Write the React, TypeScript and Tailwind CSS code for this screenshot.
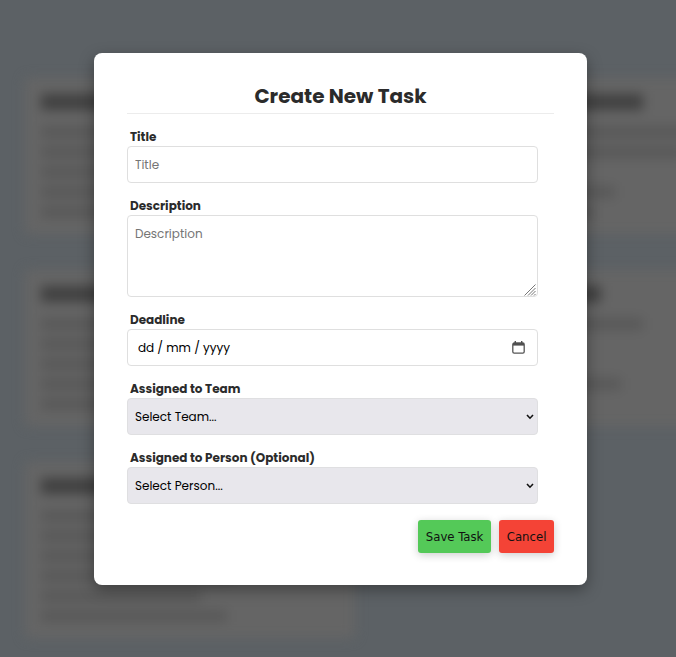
import React from "react";

type Card = { title: string; lines: string[] };

const cards: Card[] = [
  { title: "w-40", lines: ["w-72", "w-64", "w-48", "w-56", "w-52"] },
  { title: "w-[240px]", lines: ["w-[284px]", "w-[280px]", "w-0", "w-[212px]", "w-[190px]"] },
  { title: "w-44", lines: ["w-64", "w-72", "w-48", "w-56", "w-52"] },
  { title: "w-[198px]", lines: ["w-[240px]", "w-0", "w-0", "w-[218px]", "w-40"] },
  { title: "w-44", lines: ["w-72", "w-64", "w-60", "w-48", "w-[160px]", "w-[186px]"] },
];

function BackgroundCard({ title, lines }: Card) {
  return (
    <div className="rounded bg-[#656565] p-4 blur-[6px]">
      <div className={`mb-4 h-4 bg-[#404040] ${title}`} />
      <div className="flex flex-col gap-2">
        {lines.map((width, i) => (
          <div key={i} className={`h-3 bg-[#585858] ${width}`} />
        ))}
      </div>
    </div>
  );
}

function Field({ id, label, children }: { id: string; label: string; children: React.ReactNode }) {
  return (
    <div className="mb-[13px] flex flex-col">
      <label htmlFor={id} className="pl-[3px] text-[12px] leading-[19px] font-bold text-[#2b2b2b]">
        {label}
      </label>
      {children}
    </div>
  );
}

function SelectBox({ id, text }: { id: string; text: string }) {
  return (
    <div className="relative">
      <select
        id={id}
        className="block h-[37px] w-full appearance-none rounded border border-[#dfdfe1] bg-[#e8e7ec] px-[7px] text-[12px] text-black"
      >
        <option>{text}</option>
      </select>
      <svg
        className="pointer-events-none absolute top-[15px] right-1 h-2 w-2"
        viewBox="0 0 8 8"
        fill="none"
        stroke="#111"
        strokeWidth="1.6"
      >
        <path d="M1 2l3 3.2L7 2" />
      </svg>
    </div>
  );
}

export default function App() {
  return (
    <div className="relative h-screen overflow-hidden bg-[#5c6165] font-['Poppins','Inter',sans-serif]">
      <div aria-hidden="true" className="grid grid-cols-[330px_330px] gap-x-8 gap-y-9 pt-[78px] pl-[25px]">
        {cards.map((card, i) => (
          <BackgroundCard key={i} {...card} />
        ))}
      </div>

      <div className="absolute inset-0 flex items-start justify-center overflow-auto pt-[53px] pl-[5px]">
        <form
          role="dialog"
          aria-labelledby="dialog-title"
          onSubmit={(e) => e.preventDefault()}
          className="w-[73.5%] rounded-lg bg-white px-[33px] pt-7 pb-8 shadow-[0_5px_15px_rgba(0,0,0,0.35)]"
        >
          <h2
            id="dialog-title"
            className="mb-[13px] border-b border-[#ececec] pb-[2px] text-center text-[20px] leading-[30px] font-bold text-[#2b2b2b]"
          >
            Create New Task
          </h2>

          <div className="mr-4">
            <Field id="title" label="Title">
              <input
                id="title"
                type="text"
                placeholder="Title"
                className="h-[37px] rounded border border-[#dfdfdf] px-[7px] text-[12px] placeholder:text-[#757575]"
              />
            </Field>

            <Field id="description" label="Description">
              <div className="relative">
                <textarea
                  id="description"
                  placeholder="Description"
                  className="block h-[82px] w-full resize-none rounded border border-[#dfdfdf] px-[7px] py-2 text-[12px] leading-5 placeholder:text-[#757575]"
                />
                <svg
                  className="pointer-events-none absolute right-[2px] bottom-[1px] h-3 w-3"
                  viewBox="0 0 12 12"
                  stroke="#777"
                  strokeWidth="1"
                >
                  <path d="M0.5 11.5l11-11M4 11.5L11.5 4M7 11.5L11.5 7M10 11.5l1.5-1.5" />
                </svg>
              </div>
            </Field>

            <Field id="deadline" label="Deadline">
              <div className="flex h-[37px] items-center rounded border border-[#dfdfdf] pr-3 pl-[10px]">
                <input
                  id="deadline"
                  type="text"
                  placeholder="dd / mm / yyyy"
                  className="min-w-0 flex-1 text-[12px] outline-none placeholder:text-black"
                />
                <button type="button" aria-label="Open calendar">
                  <svg className="block h-[13px] w-[13px]" viewBox="0 0 13 13" fill="none">
                    <rect x="0.8" y="2" width="11.4" height="10.2" rx="1.4" stroke="#555" strokeWidth="1.3" />
                    <path d="M1 2h11v2.6H1z" fill="#505050" />
                    <path d="M3.3 0v2.5M9.7 0v2.5" stroke="#505050" strokeWidth="1.4" />
                  </svg>
                </button>
              </div>
            </Field>

            <Field id="team" label="Assigned to Team">
              <SelectBox id="team" text="Select Team..." />
            </Field>

            <Field id="person" label="Assigned to Person (Optional)">
              <SelectBox id="person" text="Select Person..." />
            </Field>
          </div>

          <div className="flex justify-end gap-2 pt-[3px] font-['DejaVu_Sans_Condensed','Noto_Sans',sans-serif] text-[13px] text-[#111]">
            <button
              type="submit"
              className="h-[33px] w-[73px] rounded-[3px] bg-[#54c958] whitespace-nowrap shadow-[0_2px_8px_rgba(0,0,0,0.2)]"
            >
              Save Task
            </button>
            <button
              type="button"
              className="h-[33px] w-[55px] rounded-[3px] bg-[#f44336] whitespace-nowrap shadow-[0_2px_8px_rgba(0,0,0,0.2)]"
            >
              Cancel
            </button>
          </div>
        </form>
      </div>
    </div>
  );
}
